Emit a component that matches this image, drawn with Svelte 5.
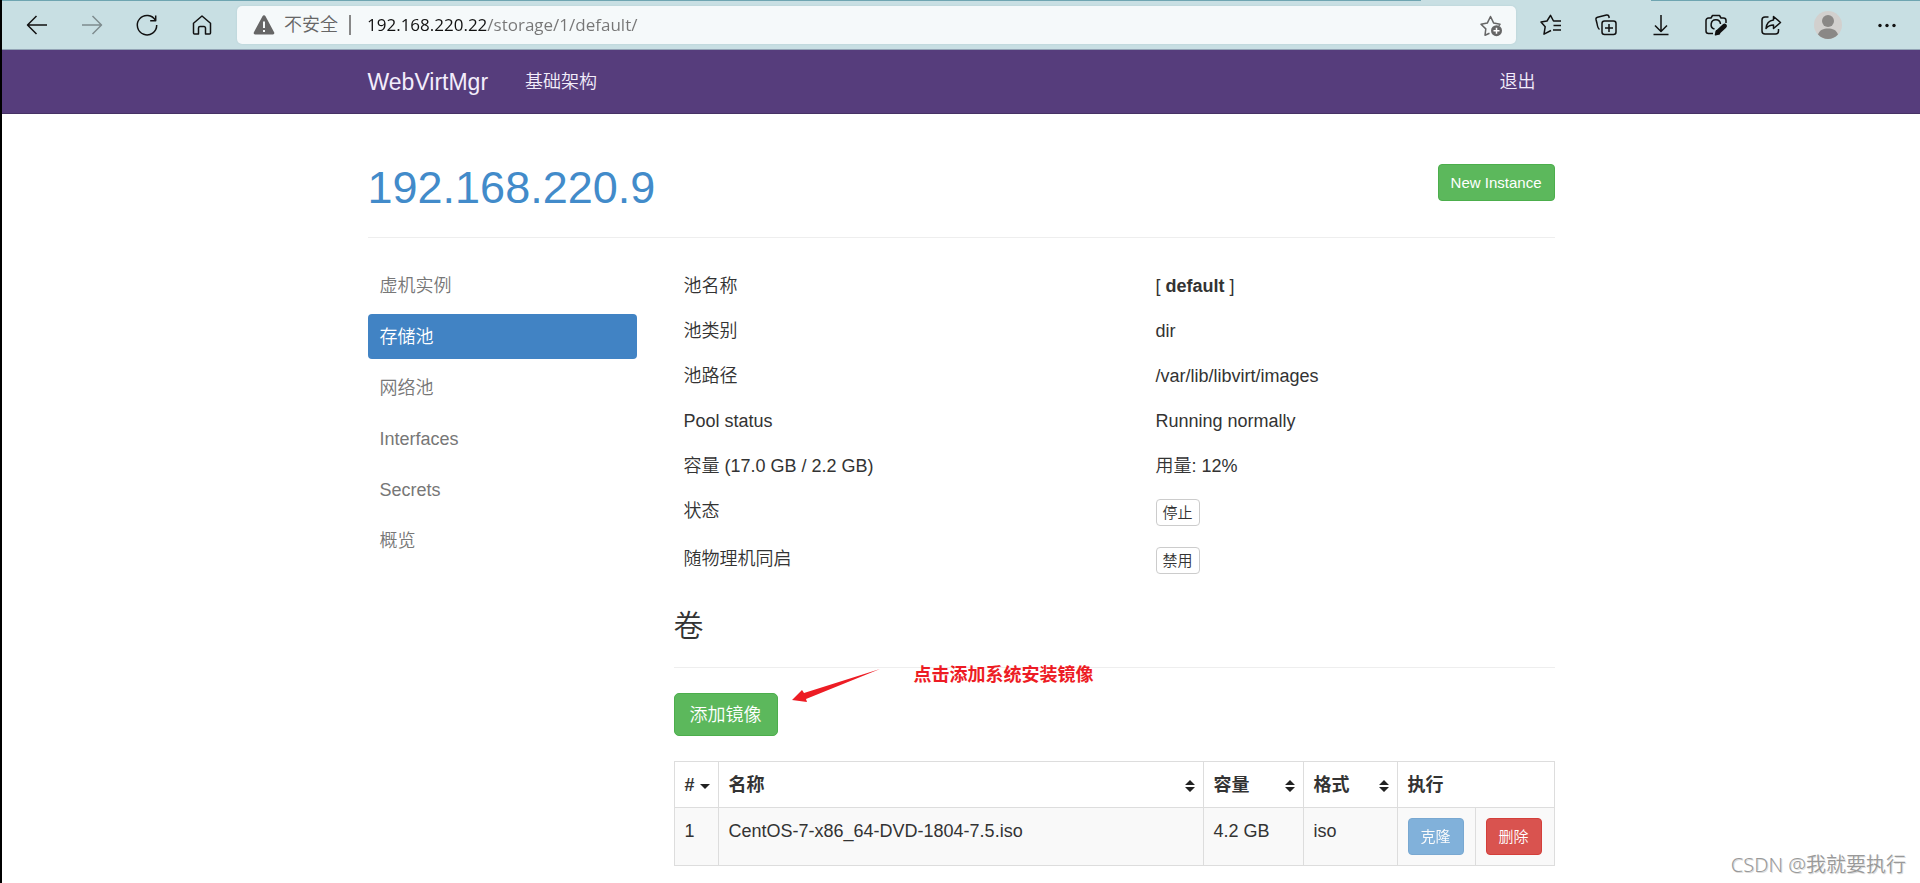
<script>
    let url = '192.168.220.22/storage/1/default/';

    // Sidebar entries for the current host
    const menu = [
        { name: '虚机实例' },
        { name: '存储池', active: true },
        { name: '网络池' },
        { name: 'Interfaces' },
        { name: 'Secrets' },
        { name: '概览' }
    ];

    // Details of the storage pool
    const details = [
        { label: '池名称', value: 'default', bold: true },
        { label: '池类别', value: 'dir' },
        { label: '池路径', value: '/var/lib/libvirt/images' },
        { label: 'Pool status', value: 'Running normally' },
        { label: '容量 (17.0 GB / 2.2 GB)', value: '用量: 12%' },
        { label: '状态', action: '停止' },
        { label: '随物理机同启', action: '禁用' }
    ];

    const volumes = [
        { id: 1, name: 'CentOS-7-x86_64-DVD-1804-7.5.iso', size: '4.2 GB', format: 'iso' }
    ];
</script>

<div class="window">
    <div class="toolbar">
        <div class="tab-line"><span></span><span></span></div>
        <button class="tool" aria-label="Back">
            <svg viewBox="0 0 24 24"><path d="M22 12H2.500M11.500 3L2.500 12l9 9" /></svg>
        </button>
        <button class="tool faded" aria-label="Forward">
            <svg viewBox="0 0 24 24"><path d="M2 12h19.500M12.500 3l9 9-9 9" /></svg>
        </button>
        <button class="tool" aria-label="Refresh">
            <svg viewBox="0 0 24 24"><path d="M20.500 7.500A9.700 9.700 0 1 0 21.700 12M20.700 2.500v5.300h-5.500" /></svg>
        </button>
        <button class="tool" aria-label="Home">
            <svg viewBox="0 0 24 24"><path d="M3.500 10.200L12 3l8.500 7.200V20a1 1 0 0 1-1 1h-4v-6a1.500 1.500 0 0 0-1.500-1.500h-4A1.500 1.500 0 0 0 8.500 15v6h-4a1 1 0 0 1-1-1z" /></svg>
        </button>

        <div class="address">
            <svg class="warn" viewBox="0 0 22 20">
                <path d="M9.500 1.200a1.700 1.700 0 0 1 3 0l8.600 16a1.500 1.500 0 0 1-1.300 2.300H2.200a1.500 1.500 0 0 1-1.300-2.300z" fill="#666" />
                <path d="M11 6.500v6.500M11 15v2" stroke="#f5f9fa" stroke-width="2" />
            </svg>
            <label for="url">不安全</label>
            <span class="divider"></span>
            <input id="url" type="text" bind:value={url} />
            <button class="star" aria-label="Add to favorites">
                <svg viewBox="0 0 24 24">
                    <path d="M10.500 20.200L6 22.300l.8-6.400L2 11.200l6.300-1.100L11.500 3.500l3.200 6.600 6.300 1.100-1.200 1.500" stroke="#666" />
                    <circle cx="17.500" cy="17.700" r="5.500" fill="#666" stroke="none" />
                    <path d="M17.500 14.700v6M14.500 17.700h6" stroke="#fff" />
                </svg>
            </button>
        </div>

        <button class="tool" aria-label="Favorites">
            <svg viewBox="0 0 24 24"><path d="M12 17.500L5 21.200l1.200-7.500L2 9l6-1L11.500 2.300 14.500 8h7.500M14.500 12.500H22M14 17h8" /></svg>
        </button>
        <button class="tool" aria-label="Collections">
            <svg viewBox="0 0 24 24"><path d="M5.500 16.500C4 15.500 3.500 13.500 3 10.500L2 6.500a2 2 0 0 1 1.500-2.300L12.500 2a2 2 0 0 1 2.400 1.500L15.200 5" /><rect x="8" y="8" width="14" height="13.500" rx="2.500" /><path d="M15 11v8M11 15h8" /></svg>
        </button>
        <button class="tool" aria-label="Downloads">
            <svg viewBox="0 0 24 24"><path d="M12 2v16M6 12.500l6 6 6-6M4.500 21.500h15" /></svg>
        </button>
        <button class="tool" aria-label="Web capture">
            <svg viewBox="0 0 24 24"><path d="M9 20.500H4.500A2.500 2.500 0 0 1 2 18V7.500A2.500 2.500 0 0 1 4.500 5H7l1.500-2.500h7L17 5h2.500A2.500 2.500 0 0 1 22 7.500V10" /><path d="M10.500 16A4.700 4.700 0 1 1 16.500 11" /><path d="M14 19l6.500-6" stroke-width="4.800" stroke-linecap="round" /><path d="M11.500 21.800l1-4 3 3z" fill="#111" /></svg>
        </button>
        <button class="tool" aria-label="Share">
            <svg viewBox="0 0 24 24"><path d="M9.500 4H6a3 3 0 0 0-3 3v11a3 3 0 0 0 3 3h10.500a3 3 0 0 0 3-3v-2" /><path d="M14.500 3.500l7 6-7 6V12c-3.500 0-5.500 1-7.500 3.500.5-5 3-8 7.500-8.500z" /></svg>
        </button>
        <button class="tool wide" aria-label="Profile">
            <svg class="avatar" viewBox="0 0 28 28">
                <circle cx="14" cy="14" r="14" fill="#d2d0ce" />
                <circle cx="14" cy="10" r="6" fill="#8a8886" />
                <path d="M4 23.500c1.500-4.500 5.500-6 10-6s8.500 1.500 10 6A14 14 0 0 1 14 28 14 14 0 0 1 4 23.500z" fill="#8a8886" />
            </svg>
        </button>
        <button class="tool wide" aria-label="Settings and more">
            <svg viewBox="0 0 24 24"><g fill="#111" stroke="none"><circle cx="5" cy="12.500" r="1.700" /><circle cx="12" cy="12.500" r="1.700" /><circle cx="19" cy="12.500" r="1.700" /></g></svg>
        </button>
    </div>

    <nav class="navbar">
        <div class="container nav-inner">
            <a class="brand" href="/">WebVirtMgr</a>
            <a href="/servers/">基础架构</a>
            <a class="logout" href="/logout/">退出</a>
        </div>
    </nav>

    <div class="container">
        <header class="page-header">
            <h1><a href="/overview/1/">192.168.220.9</a></h1>
            <button class="btn btn-sm btn-success">New Instance</button>
        </header>

        <div class="row">
            <ul class="sidebar">
                {#each menu as item}
                    <li><a href="#{item.name}" class:active={item.active}>{item.name}</a></li>
                {/each}
            </ul>

            <main>
                <table class="details">
                    <tbody>
                        {#each details as row}
                            <tr>
                                <th scope="row">{row.label}</th>
                                <td>
                                    {#if row.action}
                                        <button class="btn btn-xs">{row.action}</button>
                                    {:else if row.bold}
                                        [ <strong>{row.value}</strong> ]
                                    {:else}
                                        {row.value}
                                    {/if}
                                </td>
                            </tr>
                        {/each}
                    </tbody>
                </table>

                <section>
                    <h3>卷</h3>
                    <button class="btn btn-success">添加镜像</button>

                    <div class="note">
                        <svg viewBox="0 0 90 36">
                            <path d="M1 32L11 22l2 3L89 1 15 31l1 3z" fill="#ed1c24" />
                        </svg>
                        <span>点击添加系统安装镜像</span>
                    </div>
                </section>

                <table class="volumes">
                    <colgroup>
                        <col class="col-id" />
                        <col />
                        <col class="col-size" />
                        <col class="col-format" />
                        <col class="col-clone" />
                        <col class="col-delete" />
                    </colgroup>
                    <thead>
                        <tr>
                            <th>
                                <div class="sort"># <svg viewBox="0 0 10 12"><path d="M0 4h10L5 9z" /></svg></div>
                            </th>
                            {#each ['名称', '容量', '格式'] as title}
                                <th>
                                    <div class="sort">{title} <svg viewBox="0 0 10 12"><path d="M0 5h10L5 0zM0 7h10L5 12z" /></svg></div>
                                </th>
                            {/each}
                            <th colspan="2">执行</th>
                        </tr>
                    </thead>
                    <tbody>
                        {#each volumes as volume}
                            <tr>
                                <td>{volume.id}</td>
                                <td>{volume.name}</td>
                                <td>{volume.size}</td>
                                <td>{volume.format}</td>
                                <td class="action"><button class="btn btn-sm btn-primary" disabled>克隆</button></td>
                                <td class="action"><button class="btn btn-sm btn-danger">删除</button></td>
                            </tr>
                        {/each}
                    </tbody>
                </table>
            </main>
        </div>
    </div>

    <div class="watermark">CSDN @我就要执行</div>
</div>

<style>
    :global(body) {
        margin: 0;
        background: #fff;
    }

    .window {
        position: relative;
        box-sizing: border-box;
        min-height: 100vh;
        border-left: 2px solid #000;
        font-family: "Liberation Sans", "Noto Sans CJK SC", sans-serif;
        font-size: 18px;
        font-weight: 350;
        line-height: 25px;
        color: #333;
    }

    a {
        text-decoration: none;
    }

    strong {
        font-weight: 700;
    }

    button {
        font-family: inherit;
        font-weight: inherit;
        cursor: pointer;
    }

    /* Browser bar */
    .toolbar {
        position: relative;
        display: flex;
        align-items: center;
        box-sizing: border-box;
        height: 50px;
        padding: 0 4px 0 7px;
        background: #c8dfe3;
        border-bottom: 1px solid #93a3b5;
    }

    .tab-line {
        position: absolute;
        top: 0;
        left: 0;
        right: 0;
        display: flex;
        justify-content: space-between;
    }

    .tab-line span {
        height: 1px;
        width: 74%;
        background: #6fa5b1;
    }

    .tab-line span:last-child {
        width: 14%;
    }

    .tool {
        display: flex;
        justify-content: center;
        width: 55px;
        padding: 0;
        border: 0;
        background: none;
    }

    .tool.wide {
        width: 59px;
    }

    .tool.faded {
        opacity: 0.4;
    }

    .toolbar svg {
        width: 24px;
        height: 24px;
        fill: none;
        stroke: #111;
        stroke-width: 1.5;
        stroke-linejoin: round;
    }

    .toolbar .avatar {
        width: 28px;
        height: 28px;
        stroke: none;
    }

    .address {
        display: flex;
        flex: 1;
        align-items: center;
        height: 38px;
        margin: 0 7px 0 8px;
        padding: 0 13px 0 16px;
        background: #f5f9fa;
        border-radius: 5px;
        box-shadow: 0 0 2px #b4cdd2;
        box-sizing: border-box;
    }

    .toolbar .warn {
        width: 22px;
        height: 20px;
        stroke: none;
    }

    .address label {
        margin-left: 9px;
        padding-top: 1px;
        color: #666;
    }

    .divider {
        width: 2px;
        height: 20px;
        margin: 0 16px 0 11px;
        background: #888;
    }

    .address input {
        flex: 1;
        min-width: 0;
        padding: 0;
        border: 0;
        outline: 0;
        font-family: "Open Sans", "Noto Sans", sans-serif;
        font-size: 17px;
        line-height: 24px;
        /* host in black, path in grey */
        background: linear-gradient(to right, #111 120px, #767676 120px);
        background-clip: text;
        -webkit-background-clip: text;
        color: transparent;
    }

    .star {
        display: flex;
        padding: 0;
        border: 0;
        background: none;
    }

    /* Site navigation */
    .navbar {
        background: #563d7c;
        border-bottom: 1px solid #463265;
    }

    .container {
        max-width: 1187px;
        margin: 0 auto;
    }

    .nav-inner {
        display: flex;
        align-items: center;
        height: 63px;
    }

    .nav-inner a {
        padding-top: 1px;
        color: #f3edfb;
    }

    .nav-inner .brand {
        margin-right: 37px;
        font-size: 23px;
    }

    .nav-inner .logout {
        margin-left: auto;
        margin-right: 19px;
    }

    .page-header {
        display: flex;
        align-items: flex-start;
        justify-content: space-between;
        padding: 50px 0 25px;
        border-bottom: 1px solid #eee;
    }

    h1 {
        margin: 0;
        font-size: 45px;
        font-weight: 400;
        line-height: 48px;
    }

    h1 a {
        color: #428bca;
    }

    .row {
        display: flex;
        gap: 37px;
        padding-top: 25px;
    }

    .sidebar {
        display: flex;
        flex-direction: column;
        gap: 6px;
        flex: 0 0 269px;
        margin: 0;
        padding: 0;
        list-style: none;
    }

    .sidebar a {
        display: block;
        padding: 11px 12px 9px;
        border-radius: 4px;
        color: #777;
    }

    .sidebar a.active {
        background: #4183c4;
        color: #fff;
    }

    main {
        flex: 1;
        min-width: 0;
    }

    table {
        width: 100%;
        border-collapse: collapse;
    }

    th,
    td {
        padding: 11px 10px 9px;
        text-align: left;
        vertical-align: top;
    }

    .details th {
        width: 452px;
        font-weight: inherit;
    }

    section {
        position: relative;
    }

    h3 {
        margin: 0 0 25px;
        padding: 25px 0;
        border-bottom: 1px solid #eee;
        font-size: 30px;
        font-weight: inherit;
        line-height: 33px;
    }

    /* Buttons */
    .btn {
        display: inline-block;
        padding: 9px 15px 7px;
        border: 1px solid #ccc;
        border-radius: 5px;
        background: #fff;
        color: #333;
        font-size: 18px;
        line-height: 25px;
        vertical-align: top;
    }

    .btn-sm {
        padding: 6px 12px;
        border-radius: 4px;
        font-size: 15px;
        line-height: 23px;
    }

    .btn-xs {
        margin-bottom: 1px;
        padding: 1px 6px;
        border-radius: 4px;
        font-size: 15px;
        line-height: 23px;
    }

    .btn-success {
        background: #5cb85c;
        border-color: #4cae4c;
        color: #fff;
    }

    .btn-primary {
        background: #428bca;
        border-color: #357ebd;
        color: #fff;
    }

    .btn-danger {
        background: #d9534f;
        border-color: #d43f3a;
        color: #fff;
    }

    .btn:disabled {
        opacity: 0.65;
    }

    /* Hint lying over the section */
    .note {
        position: absolute;
        top: 79px;
        left: 117px;
        display: flex;
        gap: 33px;
        color: #ed1c24;
        font-weight: 700;
    }

    .note svg {
        width: 90px;
        height: 36px;
        margin-top: 5px;
    }

    .volumes {
        table-layout: fixed;
        margin-top: 25px;
    }

    .volumes th,
    .volumes td {
        border: 1px solid #ddd;
    }

    .volumes tbody tr {
        background: #f9f9f9;
    }

    .volumes .action {
        padding: 10px;
    }

    .col-id {
        width: 44px;
    }

    .col-size {
        width: 100px;
    }

    .col-format {
        width: 94px;
    }

    .col-clone {
        width: 78px;
    }

    .col-delete {
        width: 79px;
    }

    .sort {
        display: flex;
        align-items: center;
        justify-content: space-between;
    }

    .sort svg {
        width: 10px;
        height: 12px;
        margin-right: -2px;
        fill: #222;
    }

    .watermark {
        position: absolute;
        right: 14px;
        bottom: 4px;
        color: #999;
        font-family: "Noto Sans", "Noto Sans CJK SC", sans-serif;
        font-size: 20px;
        line-height: 28px;
        text-shadow: -1px -1px 0 #fff, 1px 1px 0 #ddd;
    }
</style>
